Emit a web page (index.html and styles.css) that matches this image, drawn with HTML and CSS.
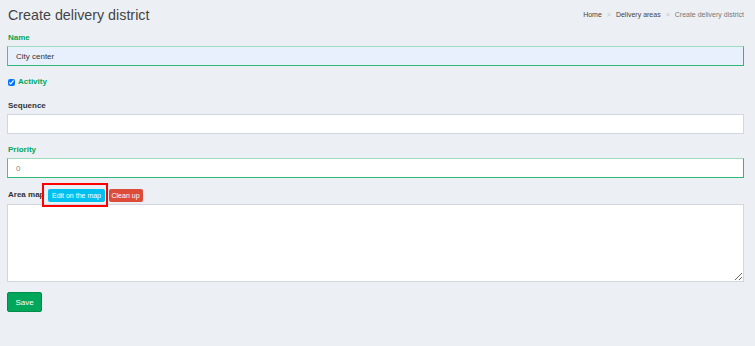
FILE: index.html
```html
<!DOCTYPE html>
<html lang="en">
<head>
<meta charset="utf-8">
<title>Create delivery district</title>
<link rel="stylesheet" href="styles.css">
</head>
<body>
<div class="page">
  <header class="header">
    <h1 class="title">Create delivery district</h1>
    <ol class="breadcrumb">
      <li class="crumb">Home</li>
      <li class="sep">&gt;</li>
      <li class="crumb">Delivery areas</li>
      <li class="sep">&gt;</li>
      <li class="crumb active">Create delivery district</li>
    </ol>
  </header>
  <form class="form">
    <div class="group">
      <label class="label success">Name</label>
      <input class="control filled success" type="text" value="City center">
    </div>
    <div class="check-row">
      <input class="check" type="checkbox" checked>
      <span class="label success">Activity</span>
    </div>
    <div class="group">
      <label class="label">Sequence</label>
      <input class="control" type="text">
    </div>
    <div class="group">
      <label class="label success">Priority</label>
      <input class="control success muted" type="text" value="0">
    </div>
    <div class="group">
      <div class="map-row">
        <span class="label inline">Area map</span>
        <button type="button" class="btn btn-info highlighted">Edit on the map</button>
        <button type="button" class="btn btn-danger">Clean up</button>
      </div>
      <textarea class="control area"></textarea>
    </div>
    <button type="button" class="btn-save">Save</button>
  </form>
</div>
</body>
</html>
```
FILE: styles.css
```css
html, body {
  margin: 0;
  padding: 0;
  background: #ecf0f5;
  font-family: "Liberation Sans", Arial, sans-serif;
  color: #333;
}
.page {
  padding: 5px 11px 0 7px;
}
.header {
  display: flex;
  align-items: center;
  justify-content: space-between;
  height: 20px;
  margin-bottom: 7px;
}
.title {
  margin: 0 0 0 1px;
  font-size: 14.3px;
  font-weight: normal;
  line-height: 20px;
  color: #444;
}
.breadcrumb {
  display: flex;
  list-style: none;
  margin: 0;
  padding: 0;
  font-size: 7px;
  line-height: 10px;
  color: #444;
}
.sep {
  color: #bbb;
  padding: 0 5px;
}
.crumb.active {
  color: #777;
}
.form {
  display: flex;
  flex-direction: column;
}
.group {
  display: flex;
  flex-direction: column;
  margin-bottom: 10px;
}
.label {
  display: block;
  font-size: 8px;
  font-weight: bold;
  line-height: 12px;
  margin: 0 0 2px 1px;
  color: #333;
}
.label.success {
  color: #00a65a;
}
.control {
  box-sizing: border-box;
  height: 20px;
  width: 100%;
  margin: 0;
  padding: 0 8px;
  border: 1px solid #d2d6de;
  background: #fff;
  font-family: "Liberation Sans", Arial, sans-serif;
  font-size: 8px;
  color: #333;
  outline: none;
}
.control.success {
  border-top: 1px solid #9fdcbe;
  border-left: 1px solid #4cc088;
  border-right: 1px solid #2fb775;
  border-bottom: 1px solid #2fb775;
}
.control.filled {
  background: #e8f0fe;
}
.control.muted {
  color: #888;
}
.check-row {
  display: flex;
  align-items: center;
  height: 12px;
  margin-bottom: 12px;
  padding-left: 1px;
}
.check {
  width: 7px;
  height: 7px;
  margin: 0 3px 0 0;
}
.check-row .label {
  margin: 0;
}
.map-row {
  display: flex;
  align-items: center;
  height: 14px;
  margin-bottom: 2px;
}
.label.inline {
  margin: 0 4px 0 1px;
}
.btn {
  position: relative;
  height: 13px;
  margin: 0 4px 0 0;
  padding: 0 3.5px;
  border: 0;
  border-radius: 2px;
  color: #fff;
  font-family: "Liberation Sans", Arial, sans-serif;
  font-size: 7px;
  line-height: 13px;
}
.btn-info {
  background: #00c0ef;
}
.btn-danger {
  background: #dd4b39;
  padding: 0 3px;
}
.highlighted::after {
  content: "";
  position: absolute;
  top: -6px;
  left: -6px;
  right: -3px;
  bottom: -5px;
  border: 2px solid #ff0000;
}
.area {
  display: block;
  height: 78px;
  resize: vertical;
  padding: 4px 8px;
}
.btn-save {
  align-self: flex-start;
  width: 35px;
  height: 20px;
  padding: 0;
  border: 1px solid #008d4c;
  border-radius: 2px;
  background: #00a65a;
  color: #fff;
  font-family: "Liberation Sans", Arial, sans-serif;
  font-size: 8px;
}
```
